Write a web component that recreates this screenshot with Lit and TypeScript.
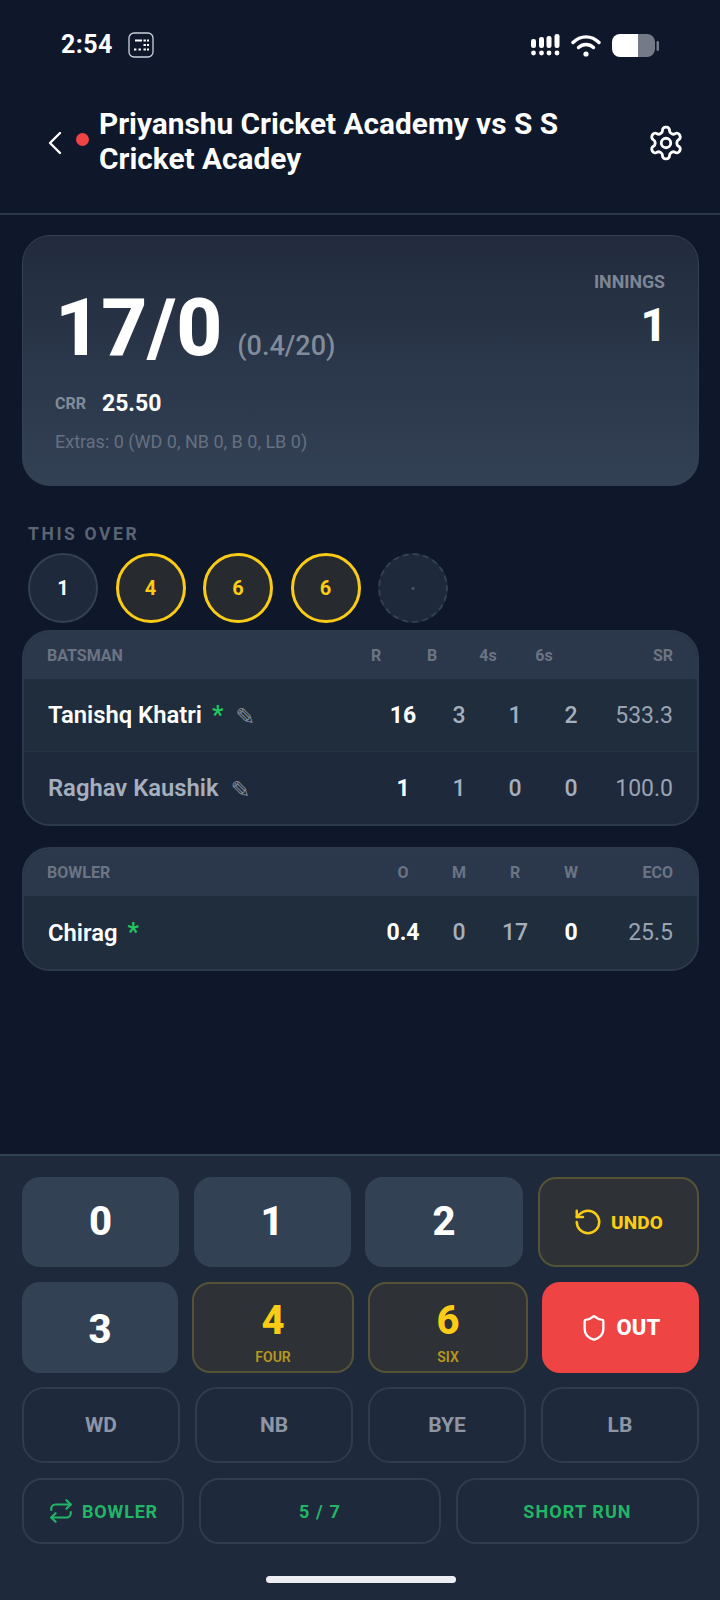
import { LitElement, html, css, svg } from "lit";
import { customElement } from "lit/decorators.js";

const gear = svg`<path d="M12.22 2h-.44a2 2 0 0 0-2 2v.18a2 2 0 0 1-1 1.73l-.43.25a2 2 0 0 1-2 0l-.15-.08a2 2 0 0 0-2.73.73l-.22.38a2 2 0 0 0 .73 2.73l.15.1a2 2 0 0 1 1 1.72v.51a2 2 0 0 1-1 1.74l-.15.09a2 2 0 0 0-.73 2.73l.22.38a2 2 0 0 0 2.73.73l.15-.08a2 2 0 0 1 2 0l.43.25a2 2 0 0 1 1 1.73V20a2 2 0 0 0 2 2h.44a2 2 0 0 0 2-2v-.18a2 2 0 0 1 1-1.73l.43-.25a2 2 0 0 1 2 0l.15.08a2 2 0 0 0 2.73-.73l.22-.39a2 2 0 0 0-.73-2.73l-.15-.08a2 2 0 0 1-1-1.74v-.5a2 2 0 0 1 1-1.74l.15-.09a2 2 0 0 0 .73-2.73l-.22-.38a2 2 0 0 0-2.73-.73l-.15.08a2 2 0 0 1-2 0l-.43-.25a2 2 0 0 1-1-1.73V4a2 2 0 0 0-2-2z"/><circle cx="12" cy="12" r="3"/>`;

@customElement("app-root")
export class AppRoot extends LitElement {
  static styles = css`
    :host { display: block; width: 720px; height: 1600px; background: #0f172a; font-family: Roboto, "Liberation Sans", sans-serif; color: #fff; overflow: hidden; }
    .page { height: 1600px; display: flex; flex-direction: column; background: #0f172a; }
    .status { height: 90px; flex: none; display: flex; align-items: center; padding: 0 61px 0 61px; box-sizing: border-box; }
    .time { font-size: 25px; font-weight: 700; line-height: 28px; letter-spacing: 0.4px; }
    .sim { width: 26px; height: 26px; margin-left: 15px; display: block; }
    .status-right { margin-left: auto; display: flex; align-items: center; gap: 11px; }
    .header { height: 123px; flex: none; box-sizing: content-box; border-bottom: 2px solid #2c384b; display: flex; align-items: center; padding: 0 35px 0 47px; }
    .back { width: 16px; height: 24px; flex: none; margin-bottom: 18px; }
    .dot { width: 13px; height: 13px; border-radius: 50%; background: #ef4444; flex: none; margin: 0 10px 25px 13px; }
    .title { flex: 1; font-size: 29.8px; font-weight: 700; line-height: 35px; margin-top: -22px; }
    .gear { width: 38px; height: 38px; flex: none; margin-bottom: 18px; fill: none; stroke: #fff; stroke-width: 1.8; stroke-linecap: round; stroke-linejoin: round; }
    .score { margin: 20px 21px 0 22px; height: 251px; box-sizing: border-box; border: 1px solid #334155; border-radius: 28px; background: linear-gradient(180deg, #212b3d, #334155); padding: 28px 33px 0 32px; display: flex; justify-content: space-between; }
    .runs-row { display: flex; align-items: baseline; gap: 15px; margin-top: 22px; height: 84px; }
    .runs { font-size: 80px; font-weight: 800; line-height: 84px; }
    .overs { font-size: 27px; font-weight: 500; color: #828b99; }
    .crr-row { display: flex; align-items: center; gap: 16px; margin-top: 18px; height: 30px; }
    .crr-l { font-size: 16px; font-weight: 700; color: #828b99; }
    .crr-v { font-size: 23px; font-weight: 700; }
    .extras { font-size: 18px; color: #667080; margin-top: 13px; line-height: 22px; }
    .inn { text-align: right; }
    .inn-l { font-size: 17.8px; font-weight: 700; color: #7e8694; line-height: 22px; margin-top: 7px; }
    .inn-v { font-size: 46px; font-weight: 800; line-height: 50px; margin: 7px -2px 0 0; }
    .over-l { font-size: 17.5px; font-weight: 700; color: #5b6472; letter-spacing: 2.6px; line-height: 20px; margin: 38px 0 0 28px; }
    .balls { display: flex; gap: 17.5px; margin: 9px 0 0 28px; }
    .ball { width: 70px; height: 70px; box-sizing: border-box; border-radius: 50%; display: flex; align-items: center; justify-content: center; font-size: 20px; font-weight: 700; border: 2px solid #334155; background: #1e293b; }
    .ball.b { border: 3px solid #facc15; background: #272a2f; color: #facc15; }
    .ball.e { border: 2px dashed #334155; color: #4b5668; }
    .table { margin: 7px 21px 0 22px; border: 2px solid #2d3a4d; border-radius: 28px; overflow: hidden; background: #1e293b; box-sizing: border-box; }
    .table + .table { margin-top: 21px; }
    .row { display: grid; grid-template-columns: 1fr 56px 56px 56px 56px 74px; align-items: center; padding: 0 24px 0 24px; }
    .hd { height: 47px; background: #2b384c; font-size: 16px; font-weight: 700; color: #6b7483; padding-left: 23px; }
    .hd.hb { grid-template-columns: 1fr 56px 56px 56px 56px 101px; }
    .hd .c { text-align: center; }
    .hd .sr { text-align: right; }
    .bat { height: 72px; font-size: 23px; }
    .bat.on { background: #1f2d3d; }
    .bat.tall { height: 73px; }
    .line { border-bottom: 1px solid #243244; }
    .name { display: flex; align-items: center; font-size: 23.8px; font-weight: 600; }
    .name.dim { color: #a5afbd; }
    .star { color: #22c55e; font-weight: 700; font-size: 25px; margin-left: 10px; }
    .pen { font-family: "DejaVu Sans", sans-serif; font-size: 24px; color: #7f8997; font-weight: 400; margin-left: 12px; transform: translateY(2px); }
    .v { text-align: center; font-weight: 500; color: #a5afbd; }
    .v.w { color: #fff; font-weight: 700; }
    .sr-v { text-align: right; color: #99a3b2; font-weight: 400; }
    .panel { margin-top: auto; height: 446px; box-sizing: border-box; border-top: 2px solid #334155; background: #1e293b; padding: 21px 21px 0 22px; display: flex; flex-direction: column; }
    .keys { display: grid; gap: 15px; }
    .k1 { grid-template-columns: 157px 157px 158px 161px; height: 90px; column-gap: 14.5px; }
    .k2 { grid-template-columns: 156px 162px 160px 157px; height: 91px; margin-top: 15px; column-gap: 14px; }
    .k3 { grid-template-columns: 158px 158px 158px 158px; height: 76px; margin-top: 14px; column-gap: 15px; }
    .k4 { grid-template-columns: 162px 242px 243px; height: 66px; margin-top: 15px; column-gap: 15px; }
    .key { border-radius: 18px; box-sizing: border-box; display: flex; flex-direction: column; align-items: center; justify-content: center; font-weight: 700; }
    .num { background: #334155; font-size: 40px; font-weight: 800; }
    .num .dig { line-height: 46px; }
    .low { padding-top: 4px; }
    .gold { background: #2e3236; border: 2px solid #555335; color: #facc15; }
    .gold .dig { font-size: 40px; font-weight: 800; line-height: 46px; margin-top: 7px; }
    .gold .sub { font-size: 14px; font-weight: 600; color: #b8971c; line-height: 16px; margin-top: 5px; }
    .row-in { display: flex; align-items: center; justify-content: center; gap: 8px; font-size: 19px; font-weight: 800; letter-spacing: 0.2px; }
    .out { background: #ef4444; }
    .out-t { font-size: 22px; }
    .ghost { border: 2px solid #2f3c50; color: #8e95a5; font-size: 21px; border-radius: 22px; }
    .green { color: #22b566; font-size: 18px; letter-spacing: 1.1px; border: 2px solid #2f3c50; border-radius: 20px; }
    .bowl { font-size: 18px; font-weight: 700; letter-spacing: 0.8px; }
    .ico { fill: none; stroke: currentColor; stroke-width: 2; stroke-linecap: round; stroke-linejoin: round; display: block; }
    .home { width: 190px; height: 7px; border-radius: 4px; background: #eceef3; margin: 32px auto 0 auto; flex: none; }
  `;

  render() {
    return html`<div class="page">
      <div class="status">
        <span class="time">2:54</span>
        <svg class="sim" viewBox="0 0 26 26" fill="none">
          <rect x="1" y="1" width="24" height="24" rx="5" stroke="#cbd2dc" stroke-width="1.3"/>
          <g fill="#fff"><rect x="7" y="7.5" width="7" height="2"/><rect x="15.5" y="7.5" width="2.4" height="2"/><rect x="19" y="7.5" width="2" height="2"/><rect x="15.5" y="12" width="2.4" height="2"/><rect x="19" y="12" width="2" height="2"/><rect x="6" y="16.5" width="2.4" height="2"/><rect x="10.5" y="16.5" width="2.4" height="2"/><rect x="15.5" y="16.5" width="2.4" height="2"/><rect x="19" y="16.5" width="2" height="2"/></g>
        </svg>
        <div class="status-right">
          <svg width="29" height="22" viewBox="0 0 29 22" fill="#fff">
            <rect x="0" y="5" width="5" height="9" rx="2.2"/><rect x="8" y="3" width="5" height="11" rx="2.2"/><rect x="15.5" y="2" width="5" height="12" rx="2.2"/><rect x="23.5" y="0" width="5" height="14" rx="2.2"/>
            <circle cx="2.5" cy="19" r="2.4"/><circle cx="10.5" cy="19" r="2.4"/><circle cx="18" cy="19" r="2.4"/><circle cx="26" cy="19" r="2.4"/>
          </svg>
          <svg width="30" height="23" viewBox="0 0 30 23" fill="none" stroke="#fff" stroke-width="3.4" stroke-linecap="round">
            <path d="M2 8.5C9.5 1 20.500 1 28 8.500"/><path d="M7.500 13.500C12 9.500 18 9.500 22.500 13.500"/><circle cx="15" cy="20" r="2.600" fill="#fff" stroke="none"/>
          </svg>
          <svg width="47" height="23" viewBox="0 0 47 23">
            <path d="M8 0H26V23H8a8 8 0 0 1-8-8V8a8 8 0 0 1 8-8z" fill="#fff"/>
            <path d="M26 0H35a8 8 0 0 1 8 8V15a8 8 0 0 1-8 8H26z" fill="#747a88"/>
            <rect x="44.500" y="7" width="2.500" height="10" rx="1.200" fill="#747a88"/>
          </svg>
        </div>
      </div>
      <div class="header">
        <svg class="back" viewBox="0 0 16 24" fill="none" stroke="#fff" stroke-width="2.4" stroke-linecap="round" stroke-linejoin="round"><path d="M13 2 3 12l10 10"/></svg>
        <span class="dot"></span>
        <div class="title">Priyanshu Cricket Academy vs S S<br>Cricket Acadey</div>
        <svg class="gear" viewBox="0 0 24 24">${gear}</svg>
      </div>
      <div class="score">
        <div>
          <div class="runs-row"><span class="runs">17/0</span><span class="overs">(0.4/20)</span></div>
          <div class="crr-row"><span class="crr-l">CRR</span><span class="crr-v">25.50</span></div>
          <div class="extras">Extras: 0 (WD 0, NB 0, B 0, LB 0)</div>
        </div>
        <div class="inn"><div class="inn-l">INNINGS</div><div class="inn-v">1</div></div>
      </div>
      <div class="over-l">THIS OVER</div>
      <div class="balls">
        <div class="ball">1</div><div class="ball b">4</div><div class="ball b">6</div><div class="ball b">6</div><div class="ball e">·</div>
      </div>
      <div class="table">
        <div class="row hd hb"><span>BATSMAN</span><span class="c">R</span><span class="c">B</span><span class="c">4s</span><span class="c">6s</span><span class="sr">SR</span></div>
        <div class="row bat on line"><span class="name">Tanishq Khatri<span class="star">*</span><span class="pen">✎</span></span><span class="v w">16</span><span class="v">3</span><span class="v">1</span><span class="v">2</span><span class="sr-v">533.3</span></div>
        <div class="row bat"><span class="name dim">Raghav Kaushik<span class="pen">✎</span></span><span class="v w">1</span><span class="v">1</span><span class="v">0</span><span class="v">0</span><span class="sr-v">100.0</span></div>
      </div>
      <div class="table">
        <div class="row hd"><span>BOWLER</span><span class="c">O</span><span class="c">M</span><span class="c">R</span><span class="c">W</span><span class="sr">ECO</span></div>
        <div class="row bat on tall"><span class="name">Chirag<span class="star">*</span></span><span class="v w">0.4</span><span class="v">0</span><span class="v">17</span><span class="v w">0</span><span class="sr-v">25.5</span></div>
      </div>
      <div class="panel">
        <div class="keys k1">
          <div class="key num"><span class="dig">0</span></div>
          <div class="key num"><span class="dig">1</span></div>
          <div class="key num"><span class="dig">2</span></div>
          <div class="key gold"><div class="row-in"><svg class="ico" width="30" height="30" viewBox="0 0 24 24"><path d="M3 12a9 9 0 1 0 9-9 9.750 9.750 0 0 0-6.740 2.740L3 8"/><path d="M3 3v5h5"/></svg>UNDO</div></div>
        </div>
        <div class="keys k2">
          <div class="key num low"><span class="dig">3</span></div>
          <div class="key gold"><span class="dig">4</span><span class="sub">FOUR</span></div>
          <div class="key gold"><span class="dig">6</span><span class="sub">SIX</span></div>
          <div class="key out"><div class="row-in"><svg class="ico" width="28" height="28" viewBox="0 0 24 24"><path d="M20 13c0 5-3.500 7.500-7.660 8.950a1 1 0 0 1-.670-.010C7.500 20.500 4 18 4 13V6a1 1 0 0 1 1-1c2 0 4.500-1.200 6.240-2.720a1.170 1.170 0 0 1 1.520 0C14.510 3.810 17 5 19 5a1 1 0 0 1 1 1z"/></svg><span class="out-t">OUT</span></div></div>
        </div>
        <div class="keys k3">
          <div class="key ghost">WD</div><div class="key ghost">NB</div><div class="key ghost">BYE</div><div class="key ghost">LB</div>
        </div>
        <div class="keys k4">
          <div class="key green"><div class="row-in bowl"><svg class="ico" width="26" height="26" viewBox="0 0 24 24"><path d="m17 2 4 4-4 4"/><path d="M3 11v-1a4 4 0 0 1 4-4h14"/><path d="m7 22-4-4 4-4"/><path d="M21 13v1a4 4 0 0 1-4 4H3"/></svg>BOWLER</div></div>
          <div class="key green">5 / 7</div>
          <div class="key green">SHORT RUN</div>
        </div>
        <div class="home"></div>
      </div>
    </div>`;
  }
}
